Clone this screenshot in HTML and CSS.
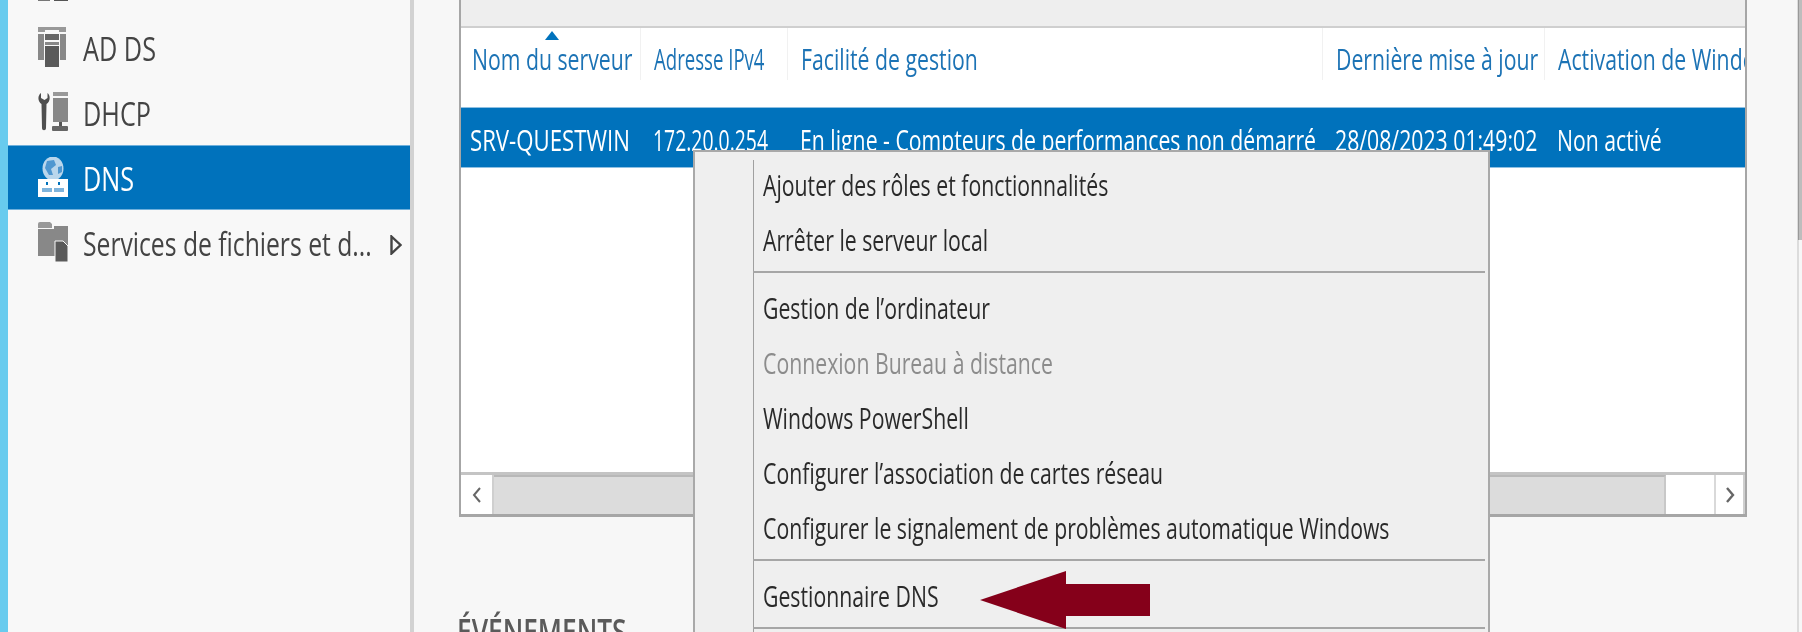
FILE: index.html
```html
<!DOCTYPE html>
<html lang="fr">
<head>
<meta charset="utf-8">
<title>Gestionnaire de serveur</title>
<link rel="stylesheet" href="styles.css">
</head>
<body>
<div class="app">
  <div class="strip"></div>
  <nav class="sidebar">
    <div class="navrow navrow-prev">
      <svg class="navicon" viewBox="0 0 30 40"><rect x="0" y="34" width="12" height="5" fill="#777"/><rect x="16" y="34" width="14" height="5" fill="#555"/></svg>
    </div>
    <div class="navrow">
      <svg class="navicon" viewBox="0 0 30 40">
        <rect x="0" y="0" width="7" height="5" fill="#999"/><rect x="21" y="0" width="7" height="5" fill="#999"/>
        <rect x="7" y="0" width="14" height="3" fill="#999"/>
        <rect x="0" y="7" width="6" height="26" fill="#888"/><rect x="22" y="7" width="6" height="26" fill="#888"/>
        <rect x="7" y="7" width="14" height="6" fill="#666"/>
        <rect x="7" y="15" width="14" height="3" fill="#888"/>
        <rect x="7" y="19" width="14" height="21" fill="#5a5a5a"/>
      </svg>
      <span class="navlabel"><span class="sq sq-nav">AD DS</span></span>
    </div>
    <div class="navrow">
      <svg class="navicon" viewBox="0 0 30 40">
        <path d="M3 1 C-1 4 0 10 3.5 12 L4 36 C4 39 8 39 8 36 L8.5 12 C12 10 13 4 9.5 1 L9.5 6 L6.5 8 L3 6 Z" fill="#4f4f4f"/>
        <rect x="15" y="0" width="15" height="4" fill="#999"/>
        <rect x="15" y="6" width="15" height="24" fill="#888"/>
        <rect x="21" y="30" width="3" height="4" fill="#555"/>
        <rect x="14" y="34" width="16" height="5" rx="1" fill="#666"/>
      </svg>
      <span class="navlabel"><span class="sq sq-nav">DHCP</span></span>
    </div>
    <div class="navrow navrow-on">
      <svg class="navicon" viewBox="0 0 30 40">
        <ellipse cx="15" cy="11.5" rx="10.5" ry="12" fill="#b9d6ec"/>
        <path d="M9 4 L16 3 L18 8 L13 12 L15 18 L11 18 L7 11 Z M20 10 L24 9 L24 15 L20 17 Z" fill="#4f97d0"/>
        <rect x="0" y="22" width="30" height="18" fill="#fff"/>
        <rect x="4" y="31" width="10" height="4" fill="#7fb4dc"/><rect x="16" y="31" width="10" height="4" fill="#7fb4dc"/>
        <rect x="8" y="25" width="2" height="3" fill="#0072bc"/><rect x="20" y="25" width="2" height="3" fill="#0072bc"/>
      </svg>
      <span class="navlabel"><span class="sq sq-nav">DNS</span></span>
    </div>
    <div class="navrow">
      <svg class="navicon" viewBox="0 0 30 40">
        <path d="M0 2 Q0 0 2 0 L12 0 L14 2 L14 6 L0 6 Z" fill="#999"/>
        <rect x="0" y="7" width="17" height="27" fill="#888"/>
        <rect x="16" y="4" width="14" height="20" fill="#888"/>
        <path d="M17 19 L25 19 L30 24 L30 40 L17 40 Z" fill="#5a5a5a" stroke="#f8f8f8"/>
      </svg>
      <span class="navlabel"><span class="sq sq-long">Services de fichiers et d...</span></span>
      <svg class="chev" viewBox="0 0 12 20"><path d="M1.5 1.5 L10.5 10 L1.5 18.5 Z" fill="none" stroke="#444" stroke-width="2.4"/></svg>
    </div>
  </nav>
  <main class="main">
    <section class="panel">
      <div class="panel-top"></div>
      <div class="thead">
        <div class="th c1"><span class="sq">Nom du serveur</span><i class="sort"></i></div>
        <div class="th c2"><span class="sq sq-ipv4">Adresse IPv4</span></div>
        <div class="th c3"><span class="sq">Facilité de gestion</span></div>
        <div class="th c4"><span class="sq">Dernière mise à jour</span></div>
        <div class="th c5"><span class="sq">Activation de Windows</span></div>
      </div>
      <div class="trow">
        <div class="td c1"><span class="sq sq-host">SRV-QUESTWIN</span></div>
        <div class="td c2"><span class="sq sq-ip">172.20.0.254</span></div>
        <div class="td c3"><span class="sq">En ligne - Compteurs de performances non démarré</span></div>
        <div class="td c4"><span class="sq">28/08/2023 01:49:02</span></div>
        <div class="td c5"><span class="sq">Non activé</span></div>
      </div>
      <div class="tbody-empty"></div>
      <div class="hscroll">
        <div class="sbtn sbtn-l"><svg viewBox="0 0 10 16" class="sarrow"><path d="M8 1 L2 8 L8 15" fill="none" stroke="#666" stroke-width="2"/></svg></div>
        <div class="sthumb"></div>
        <div class="strack"></div>
        <div class="sbtn sbtn-r"><svg viewBox="0 0 10 16" class="sarrow"><path d="M2 1 L8 8 L2 15" fill="none" stroke="#666" stroke-width="2.4"/></svg></div>
      </div>
    </section>
    <h2 class="events"><span class="sq sq-events">ÉVÉNEMENTS</span></h2>
  </main>
  <div class="edge"><div class="edge-thumb"></div></div>
</div>

<div class="menu">
  <div class="mitem"><span class="sq">Ajouter des rôles et fonctionnalités</span></div>
  <div class="mitem"><span class="sq">Arrêter le serveur local</span></div>
  <div class="msep"></div>
  <div class="mitem"><span class="sq">Gestion de l’ordinateur</span></div>
  <div class="mitem mitem-off"><span class="sq">Connexion Bureau à distance</span></div>
  <div class="mitem"><span class="sq">Windows PowerShell</span></div>
  <div class="mitem"><span class="sq">Configurer l’association de cartes réseau</span></div>
  <div class="mitem"><span class="sq">Configurer le signalement de problèmes automatique Windows</span></div>
  <div class="msep"></div>
  <div class="mitem"><span class="sq">Gestionnaire DNS</span></div>
  <div class="msep"></div>
</div>
<svg class="callout" viewBox="0 0 172 60"><path d="M0 30 L86 1 L86 14 L170 14 L170 46 L86 46 L86 59 Z" fill="#85001a"/></svg>
</body>
</html>
```

FILE: styles.css
```css
* { box-sizing: border-box; }
html, body { margin: 0; height: 632px; overflow: hidden; }
body { font-family: "Open Sans", "Liberation Sans", sans-serif; background: #f7f7f7; position: relative; }

.sq { display: inline-block; white-space: nowrap; transform: scaleX(0.708); transform-origin: left center; filter: blur(0.5px); }
.sq-nav { transform: scaleX(0.765); }
.sq-long { transform: scaleX(0.748); }
.sq-ipv4 { transform: scaleX(0.62); }
.sq-host { transform: scaleX(0.74); }
.sq-ip { transform: scaleX(0.646); }
.sq-events { transform: scaleX(0.75); }

.app { display: flex; height: 632px; overflow: hidden; }
.strip { width: 8px; flex: none; background: #68cbee; }

.sidebar { width: 406px; flex: none; height: 632px; background: #f8f8f8; border-right: 4px solid #d2d2d2; overflow: hidden; }
.navrow { height: 65px; display: flex; align-items: center; padding-left: 30px; font-size: 33px; color: #444; position: relative; }
.navrow-prev { margin-top: -50px; }
.navrow-on { background: #0072bc; color: #fff; border-top: 1px solid #6fb0dc; border-bottom: 1px solid #6fb0dc; }
.navicon { width: 30px; height: 40px; flex: none; margin-top: -1px; }
.navlabel { margin-left: 15px; margin-top: 2px; white-space: nowrap; }
.chev { position: absolute; left: 382px; top: 25px; width: 12px; height: 20px; }

.main { width: 1383px; flex: none; padding-left: 45px; background: #f7f7f7; }

.panel { width: 1288px; height: 517px; background: #fff; border: 2px solid #a6a6a6; border-width: 0 2px 3px; display: flex; flex-direction: column; overflow: hidden; }
.panel-top { height: 28px; flex: none; background: #eeeeee; border-bottom: 2px solid #cfcfcf; }
.thead, .trow { display: grid; grid-template-columns: 180px 147px 535px 222px 200px; flex: none; }
.thead { height: 79px; font-size: 30px; color: #1c73b5; background: #fff; }
.trow { height: 61px; font-size: 30px; color: #fff; background: #0072bc; border-top: 1px solid #8fc0e2; border-bottom: 1px solid #8fc0e2; }
.th { position: relative; height: 52px; padding: 12px 0 0 13px; border-right: 1px solid #f1f1f1; white-space: nowrap; line-height: 38px; }
.th.c1 { padding-left: 11px; }
.th.c5 { border-right: 0; }
.td { padding-left: 12px; line-height: 63px; white-space: nowrap; }
.td.c1 { padding-left: 9px; }
.sort { position: absolute; left: 84px; top: 3px; width: 0; height: 0; border-left: 7px solid transparent; border-right: 7px solid transparent; border-bottom: 9px solid #0072bc; }
.tbody-empty { flex: 1; background: #fff; }

.hscroll { height: 42px; flex: none; display: flex; background: #fff; border-top: 3px solid #c4c4c4; }
.sbtn { width: 31px; flex: none; display: flex; align-items: center; justify-content: center; background: #fff; border-right: 2px solid #cfcfcf; }
.sbtn-l { width: 33px; }
.sbtn-r { border-left: 2px solid #d9d9d9; }
.sarrow { width: 10px; height: 16px; }
.sthumb { width: 1172px; flex: none; background: #dcdcdc; border-top: 2px solid #b8b8b8; border-right: 2px solid #c8c8c8; }
.strack { flex: 1; background: #fff; }

.events { margin: 92px 0 0 -2px; font-size: 35px; font-weight: 600; color: #5a5a5a; line-height: 44px; }

.edge { flex: 1; position: relative; background: #f7f7f7; border-left: 2px solid #dcdcdc; }
.edge-thumb { height: 240px; width: 4px; margin-left: -1px; background: #bdbdbd; border-left: 1px solid #999; }

.menu { position: absolute; left: 693px; top: 150px; width: 797px; height: 482px; padding-top: 6px; background: #efefef; border: 2px solid #a9a9a9; border-bottom: 0; }
.menu::before { content: ""; position: absolute; left: 58px; top: 8px; bottom: 0; width: 1px; background: #a0a0a0; }
.mitem { height: 55px; padding-left: 68px; font-size: 30px; line-height: 53px; color: #2a2a2a; white-space: nowrap; }
.mitem-off { color: #8c8c8c; }
.msep { height: 13px; margin: 0 3px 0 58px; position: relative; }
.msep::after { content: ""; position: absolute; left: 0; right: 0; top: 3px; height: 2px; background: #a6a6a6; }

.callout { position: absolute; left: 980px; top: 570px; width: 172px; height: 60px; }
```
